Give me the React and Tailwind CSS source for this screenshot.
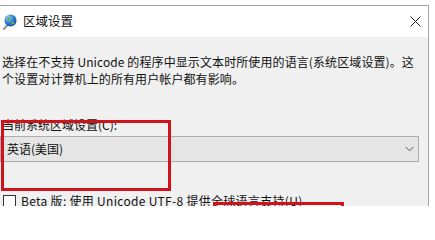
import React from "react";

const Globe = () => (
  <svg width="15" height="16" viewBox="0 0 15 16">
    <defs>
      <radialGradient id="g" cx="0.35" cy="0.3" r="0.8">
        <stop offset="0" stopColor="#9fd3ff" />
        <stop offset="0.5" stopColor="#2f7fd6" />
        <stop offset="1" stopColor="#14408f" />
      </radialGradient>
    </defs>
    <path d="M2 15 L5.5 11" stroke="#9a9a9a" strokeWidth="2.2" strokeLinecap="round" />
    <circle cx="8.5" cy="6.5" r="6" fill="url(#g)" />
    <path d="M5.5 3.5 Q7.5 2.5 9 4 Q8.5 6.3 6.5 6.8 Q5 6.3 5.5 3.5Z" fill="#5fb84a" />
    <path d="M10 7.5 Q12 7.5 12.5 9 Q11 11 9.5 10.5 Q9 9 10 7.5Z" fill="#5fb84a" />
  </svg>
);

export default function App() {
  return (
    <div
      className="relative w-[435px] h-[206px] overflow-hidden bg-white text-[12px] text-[#111]"
      style={{ fontFamily: '"Noto Sans CJK SC", "Noto Sans", sans-serif' }}
    >
      <div className="mt-[5px] w-[429px] h-[201px] border-t border-r border-[#a5a5a5] flex flex-col">
        {/* title bar */}
        <div className="h-[31px] bg-white flex items-center shrink-0">
          <div className="ml-[2px] mt-[1px]">
            <Globe />
          </div>
          <span className="ml-[6px] text-[12.5px] leading-none">区域设置</span>
          <svg className="ml-auto mr-[7px]" width="11" height="11" viewBox="0 0 11 11">
            <path d="M0.5 0.5 L10.5 10.5 M10.5 0.5 L0.5 10.5" stroke="#222" strokeWidth="1" />
          </svg>
        </div>

        {/* body */}
        <div className="flex-1 bg-[#f0f0f0] pl-[2px] pr-[9px] pt-[16px]">
          <p className="leading-[17px] tracking-[0.1px]">
            选择在不支持 Unicode 的程序中显示文本时所使用的语言(系统区域设置)。这个设置对计算机上的所有用户帐户都有影响。
          </p>

          <p className="mt-[31px] leading-[14px]">当前系统区域设置(C):</p>

          <div className="mt-[4px] -ml-[2px] w-[419px] h-[26px] bg-[#e5e5e5] border border-[#adadad] flex items-center pl-[6px] pr-[4px]">
            <span>英语(美国)</span>
            <svg className="ml-auto" width="9" height="6" viewBox="0 0 9 6">
              <path d="M0.5 0.8 L4.5 4.8 L8.5 0.8" fill="none" stroke="#555" strokeWidth="1" />
            </svg>
          </div>

          <div className="mt-[32px] flex items-center gap-[5px]">
            <span className="ml-[1px] w-[13px] h-[13px] border border-[#333] bg-white shrink-0" />
            <span className="leading-[14px] tracking-[0.3px]">Beta 版: 使用 Unicode UTF-8 提供全球语言支持(U)</span>
          </div>
        </div>
      </div>

      {/* red annotation boxes */}
      <div className="absolute left-[1px] top-[120px] w-[170px] h-[71px] border-[3px] border-[#d0121b]" />
      <div className="absolute left-[213px] top-[202px] w-[131px] h-[20px] border-[3px] border-[#d0121b]" />
    </div>
  );
}
